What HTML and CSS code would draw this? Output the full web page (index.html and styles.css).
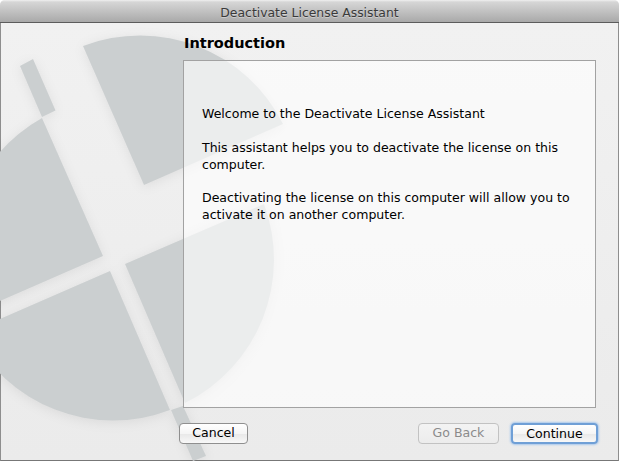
FILE: index.html
```html
<!DOCTYPE html>
<html lang="en">
<head>
<meta charset="utf-8">
<title>Deactivate License Assistant</title>
<link rel="stylesheet" href="styles.css">
</head>
<body>
<div class="window">
  <header class="titlebar">Deactivate License Assistant</header>
  <main class="content">
    <svg class="logo" width="619" height="438" viewBox="0 23 619 438" aria-hidden="true">
      <g class="logo-shapes">
        <path d="M83 46 A160 160 0 0 1 283 124 L144 185 Z"/>
        <path d="M42 118 L103 256 L-30 314 A160 160 0 0 1 42 118 Z"/>
        <path d="M110 271 L170 410 A160 160 0 0 1 -30 332 Z"/>
        <path d="M125 264 L264 204 A160 160 0 0 1 185 403 Z"/>
        <path d="M20 66 L33 59 L55.500 110.500 L42 117 Z"/>
        <path d="M171 410 L183 406 L206 456 L193 461 Z"/>
      </g>
    </svg>
    <h1 class="heading">Introduction</h1>
    <section class="panel">
      <p>Welcome to the Deactivate License Assistant</p>
      <p>This assistant helps you to deactivate the license on this computer.</p>
      <p>Deactivating the license on this computer will allow you to activate it on another computer.</p>
    </section>
    <footer class="actions">
      <button class="btn">Cancel</button>
      <div class="nav">
        <button class="btn btn-back" disabled>Go Back</button>
        <button class="btn btn-continue">Continue</button>
      </div>
    </footer>
  </main>
</div>
</body>
</html>
```
FILE: styles.css
```css
* { box-sizing: border-box; }
html, body { margin: 0; height: 100%; background: #fff; }
body { font-family: "DejaVu Sans", sans-serif; color: #000; overflow: hidden; }
.window {
  width: 619px; height: 461px; display: flex; flex-direction: column;
  border-radius: 5px 5px 0 0; overflow: hidden; background: #ededed;
}
.titlebar {
  height: 23px; flex: none; text-align: center; font-size: 12.400px; line-height: 25px; color: #3a3a3a;
  background: linear-gradient(#f0f0f0, #d6d6d6 2px, #a9a9a9);
  border-bottom: 1px solid #5c5c5c; text-shadow: 0 1px 0 rgba(255,255,255,.35);
}
.content {
  position: relative; flex: 1; display: flex; flex-direction: column;
  padding: 10px 20px 0 178px;
  background: linear-gradient(#f1f1f1, #ebebeb);
  border-left: 1px solid #8e8e8e; border-right: 1px solid #8e8e8e; border-bottom: 1px solid #777;
}
.logo { position: absolute; left: -1px; top: 0; }
.logo-shapes { fill: #cbcfd0; filter: drop-shadow(0 2px 6px rgba(0,0,0,.07)); }
.heading { position: relative; margin: 0 0 6px 5px; font-size: 14.500px; line-height: 21px; font-weight: bold; }
.panel {
  position: relative; margin-left: 4px; width: 413px; height: 348px;
  border: 1px solid #a2a2a2; background: rgba(255,255,255,.62);
  padding: 44px 18px 0; font-size: 12.540px; line-height: 17px;
}
.panel p { margin: 0 0 16.500px; }
.actions { position: relative; display: flex; justify-content: space-between; margin-top: 15px; }
.nav { display: flex; gap: 12px; }
.btn {
  height: 21px; padding: 0 0 2px; font: 12.540px/17px "DejaVu Sans", sans-serif; color: #000;
  border: 1px solid #8f8f8f; border-radius: 4px; width: 69px;
  background: linear-gradient(#fff, #f5f5f5 50%, #e8e8e8 52%, #f8f8f8);
}
.btn-back { width: 81px; color: #8b8b8b; border-color: #c2c2c2; background: linear-gradient(#f3f3f3, #ececec); }
.btn-continue {
  width: 87px; border: 2px solid #6f9fd6; box-shadow: 0 0 2px 1px #a9c8ec;
}
```
